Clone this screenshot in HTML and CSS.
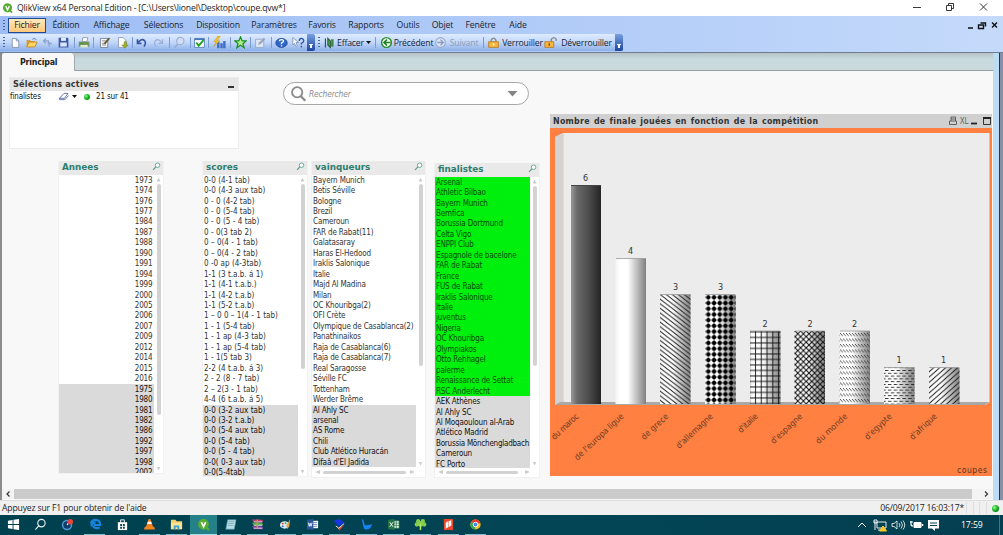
FILE: index.html
```html
<!DOCTYPE html>
<html lang="fr">
<head>
<meta charset="utf-8">
<title>QlikView x64 Personal Edition</title>
<link rel="stylesheet" href="styles.css">
</head>
<body>
<svg class="defs" width="0" height="0">
  <defs>
    <symbol id="lens" viewBox="0 0 10 10"><circle cx="6.2" cy="3.6" r="2.5" fill="#fff" stroke="#4f9a8c" stroke-width=".9"/><path d="M4.3 5.5L1.2 8.7" stroke="#4f9a8c" stroke-width="1.2"/></symbol>
    <symbol id="qlik" viewBox="0 0 12 12"><circle cx="6" cy="5.8" r="5" fill="#56ad32"/><path d="M8 8l3 3" stroke="#56ad32" stroke-width="2"/><path d="M4 3.8l2 4.2 2-4.2" fill="none" stroke="#fff" stroke-width="1.5"/></symbol>
  </defs>
</svg>
<div class="window">
  <header class="titlebar">
    <svg class="app-icon" viewBox="0 0 12 12"><use href="#qlik"/></svg>
    <span class="title">QlikView x64 Personal Edition - [C:\Users\lionel\Desktop\coupe.qvw*]</span>
    <svg class="win-buttons" viewBox="0 0 80 16" fill="none" stroke="#222" stroke-width=".9"><path d="M1 7.500h8M34.500 5.500h5v5h-5zM36.500 5.500v-2h5v5h-2M68 3.500l7 7M75 3.500l-7 7"/></svg>
  </header>
  <nav class="menubar">
    <span class="grip"></span>
    <span class="menu active">Fichier</span><span class="menu">Édition</span><span class="menu">Affichage</span><span class="menu">Sélections</span><span class="menu">Disposition</span><span class="menu">Paramètres</span><span class="menu">Favoris</span><span class="menu">Rapports</span><span class="menu">Outils</span><span class="menu">Objet</span><span class="menu">Fenêtre</span><span class="menu">Aide</span>
    <svg class="mdi" viewBox="0 0 32 10" fill="none" stroke="#111"><path d="M1 8h5M13.500 3h5v3.500M11.500 5h5v3.500h-5zM25 2.500l5 5M30 2.500l-5 5" stroke-width="1.4"/></svg>
  </nav>
  <div class="toolbars">
    <div class="bar main-bar">
      <span class="grip"></span>
      <svg class="ic" viewBox="0 0 16 16"><path d="M4 3h5l3 3v8H4z" fill="#fff" stroke="#7a8aa8"/><path d="M9 3v3h3" fill="none" stroke="#7a8aa8"/></svg>
      <svg class="ic" viewBox="0 0 16 16"><path d="M2 13V5h4l1 1h5v7z" fill="#d69c34"/><path d="M2 13.500l3-6h10l-3 6z" fill="#ffd45f" stroke="#c08322"/><path d="M9 4q3-3 5 1" fill="none" stroke="#4b6b9c"/></svg>
      <svg class="ic" viewBox="0 0 16 16" fill="none" stroke="#8ba4cc" stroke-width="1.6"><path d="M3 6h6v4M6 3L3 6l3 3M13 9h-3v4M10 8l3 2"/></svg>
      <svg class="ic" viewBox="0 0 16 16"><path d="M2 2h11l1 1v11H2z" fill="#3e5aa6"/><path d="M5 2h6v4H5z" fill="#e4ecfa"/><path d="M4 8h8v5H4z" fill="#d9e4f5"/></svg>
      <i class="sep"></i>
      <svg class="ic" viewBox="0 0 16 16"><path d="M5 7l1-5h6l-1 5z" fill="#fff" stroke="#8590a3"/><path d="M1 7h13v6H1z" fill="#75905e"/><path d="M3 11h9v3H3z" fill="#dcebc8"/><path d="M3 9h4" stroke="#35a329" stroke-width="1.500"/></svg>
      <i class="sep"></i>
      <svg class="ic" viewBox="0 0 16 16"><path d="M3 3h9v11H3z" fill="#f7f9ff" stroke="#68758b"/><path d="M5 6h5M5 9h5M5 11h5" stroke="#777"/><path d="M7 9l6-7 2 1-6 7z" fill="#6b5a2c"/></svg>
      <svg class="ic" viewBox="0 0 16 16"><path d="M3 2h6l3 3v9H3z" fill="#fff" stroke="#8792a8"/><path d="M10 7v4h-3l4 4 4-4h-2V7z" fill="#9cad2c" stroke="#71821b" stroke-width=".6"/></svg>
      <i class="sep"></i>
      <svg class="ic" viewBox="0 0 16 16"><path d="M3 4v5h5M3.500 8.500Q8 2 12 6q2 3-1 7" fill="none" stroke="#3657a8" stroke-width="2"/></svg>
      <svg class="ic" viewBox="0 0 16 16"><path d="M13 4v5H8M12.500 8.500Q8 2 4 6q-2 3 1 7" fill="none" stroke="#9db0d4" stroke-width="1.600"/></svg>
      <i class="sep"></i>
      <svg class="ic" viewBox="0 0 16 16"><circle cx="9" cy="6" r="4.500" fill="#cfdcf3" stroke="#9aaccd" stroke-width="1.300"/><path d="M6 10l-4 4" stroke="#9aaccd" stroke-width="2"/></svg>
      <i class="sep"></i>
      <svg class="ic" viewBox="0 0 16 16"><path d="M2 3h12v11H2z" fill="#fff" stroke="#4876b9"/><path d="M2 3h12v2H2z" fill="#4876b9"/><path d="M4 8l3 4 6-7" fill="none" stroke="#24a322" stroke-width="2.400"/></svg>
      <i class="sep"></i>
      <svg class="ic" viewBox="0 0 16 16"><path d="M5 7h3v8H5zM9 9h3v6H9zM12.500 6h3v9h-3z" fill="#416fc2"/><path d="M6 0L1 7h3l-3 6 7-7H5l4-6z" fill="#ffc928" stroke="#b98714" stroke-width=".6"/></svg>
      <i class="sep"></i>
      <svg class="ic" viewBox="0 0 16 16"><path d="M8 1l2 5h5l-4 3.500 1.500 5L8 11.500l-4.500 3 1.500-5L1 6h5z" fill="#b5ee8e" stroke="#189025" stroke-width="1.500"/></svg>
      <i class="sep"></i>
      <svg class="ic" viewBox="0 0 16 16"><path d="M2 4h10v10H2z" fill="#dfe8f7" stroke="#90a2c1"/><path d="M5 11l1-3 6-6 2 2-6 6z" fill="#9aa7bd"/></svg>
      <i class="sep"></i>
      <svg class="ic" viewBox="0 0 16 16"><ellipse cx="8" cy="8.500" rx="7" ry="5.500" fill="#2f66c9" stroke="#183f91"/><path d="M5.500 6.500q0-2 2.500-2T10.500 6.500q0 1-2.500 2V10M8 11.300v1.500" fill="none" stroke="#fff" stroke-width="1.600"/></svg>
      <svg class="ic" viewBox="0 0 16 16"><path d="M1 2v9l2-2 2 4 1.500-1L5 8h3z" fill="#fff" stroke="#6176a0" stroke-width=".8"/><path d="M9 6q0-3 2.500-3T14.500 6q0 1.500-3 3v1.500M11.500 12v2" fill="none" stroke="#2b54a8" stroke-width="1.600"/></svg>
      <span class="cap"></span>
    </div>
    <div class="bar nav-bar">
      <span class="grip"></span>
      <svg class="ic" viewBox="0 0 16 16"><path d="M3 3v11M6 3l3 3v8l-3-3z" stroke="#245b36" stroke-width="1.400" fill="#4cb04f"/><path d="M10 4h3v9h-3z" fill="#407f45"/></svg>
      <span class="btn">Effacer</span><span class="caret"></span><i class="sep"></i>
      <svg class="ic" viewBox="0 0 16 16"><circle cx="8" cy="8" r="6" fill="#f4fff0" stroke="#278d30" stroke-width="1.800"/><path d="M13 8H5M8.500 4.500L5 8l3.500 3.500" fill="none" stroke="#217f2b" stroke-width="2"/></svg>
      <span class="btn">Précédent</span>
      <svg class="ic" viewBox="0 0 16 16"><circle cx="8" cy="8" r="6" fill="#d9e6fa" stroke="#98a9c8" stroke-width="1.300"/><path d="M4 8h7M8 4.500L11.500 8 8 11.500" fill="none" stroke="#8a9cbd" stroke-width="1.600"/></svg>
      <span class="btn off">Suivant</span><i class="sep"></i>
      <svg class="ic" viewBox="0 0 16 16"><path d="M5 8V5q3-5 6 0v3" fill="none" stroke="#8b8b83" stroke-width="1.600"/><path d="M2 7h12v7H2z" fill="#f5b63c" stroke="#b9761d"/><path d="M8 9v3" stroke="#fff2c8" stroke-width="2"/></svg>
      <span class="btn">Verrouiller</span>
      <svg class="ic" viewBox="0 0 16 16"><path d="M9 8V4q3-4 6 0v2" fill="none" stroke="#8b8b83" stroke-width="1.600"/><path d="M1 7h11v7H1z" fill="#f5b63c" stroke="#b9761d"/><path d="M6.500 9v3" stroke="#a23a12" stroke-width="1.800"/></svg>
      <span class="btn">Déverrouiller</span>
      <span class="cap"></span>
    </div>
  </div>
  <div class="workspace">
    <div class="document">
      <div class="tabs"><span class="tab">Principal</span></div>
      <main class="sheet">
        <section class="left">
          <div class="top-row">
            <div class="selections">
              <div class="sel-head"><span>Sélections actives</span><i class="minimize"></i></div>
              <div class="sel-row"><span class="field">finalistes</span>
                <svg class="eraser" viewBox="0 0 12 10"><path d="M1 7l5-5.500h4.500L6.500 7z" fill="#fff" stroke="#596ba2"/><path d="M1 7v1.500h6L11 4" fill="none" stroke="#596ba2"/></svg>
                <span class="caret"></span><i class="dot"></i><span>21 sur 41</span></div>
            </div>
            <div class="search">
              <svg class="search-icon" viewBox="0 0 20 20" fill="none" stroke="#8a8a8a"><circle cx="8" cy="8" r="5.700" stroke-width="2"/><path d="M12 12.500l5 5" stroke-width="2.600"/></svg>
              <span class="hint">Rechercher</span><i class="drop"></i>
            </div>
          </div>
          <div class="lists">
            <article class="listbox years">
              <h2>Annees<svg viewBox="0 0 10 10"><use href="#lens"/></svg></h2>
              <div class="body">
                <ul>
                  <li>1973</li><li>1974</li><li>1976</li><li>1977</li><li>1984</li><li>1987</li><li>1988</li><li>1990</li><li>1991</li><li>1994</li><li>1999</li><li>2000</li><li>2005</li><li>2006</li><li>2007</li><li>2009</li><li>2012</li><li>2014</li><li>2015</li><li>2016</li>
                  <li class="ex">1975</li><li class="ex">1980</li><li class="ex">1981</li><li class="ex">1982</li><li class="ex">1986</li><li class="ex">1992</li><li class="ex">1997</li><li class="ex">1998</li><li class="ex">2002</li>
                </ul>
                <div class="vscroll"><i class="up"></i><i class="thumb"></i><i class="down"></i></div>
              </div>
            </article>
            <article class="listbox scores">
              <h2>scores<svg viewBox="0 0 10 10"><use href="#lens"/></svg></h2>
              <div class="body">
                <ul>
                  <li>0-0 (4-1 tab)</li><li>0-0 (4-3 aux tab)</li><li>0 - 0 (4-2 tab)</li><li>0 - 0 (5-4 tab)</li><li>0 - 0 (5 - 4 tab)</li><li>0 - 0(3 tab 2)</li><li>0 – 0(4 - 1 tab)</li><li>0 – 0(4 - 2 tab)</li><li>0 -0 ap (4-3tab)</li><li>1-1 (3 t.a.b. á 1)</li><li>1-1 (4-1 t.a.b.)</li><li>1-1 (4-2 t.a.b)</li><li>1-1 (5-2 t.a.b)</li><li>1 – 0 0 – 1(4 - 1 tab)</li><li>1 - 1 (5-4 tab)</li><li>1 - 1 ap (4-3 tab)</li><li>1 - 1 ap (5-4 tab)</li><li>1 - 1(5 tab 3)</li><li>2-2 (4 t.a.b. á 3)</li><li>2 - 2 (8 - 7 tab)</li><li>2 – 2(3 - 1 tab)</li><li>4-4 (6 t.a.b. á 5)</li>
                  <li class="ex">0-0 (3-2 aux tab)</li><li class="ex">0-0 (3-2 t.a.b)</li><li class="ex">0-0 (5-4 aux tab)</li><li class="ex">0-0 (5-4 tab)</li><li class="ex">0-0 (5 - 4 tab)</li><li class="ex">0-0( 0-3 aux tab)</li><li class="ex">0-0(5-4tab)</li>
                </ul>
                <div class="vscroll"><i class="up"></i><i class="thumb"></i><i class="down"></i></div>
              </div>
            </article>
            <article class="listbox winners">
              <h2>vainqueurs<svg viewBox="0 0 10 10"><use href="#lens"/></svg></h2>
              <div class="body">
                <ul>
                  <li>Bayern Munich</li><li>Betis Séville</li><li>Bologne</li><li>Brezil</li><li>Cameroun</li><li>FAR de Rabat(11)</li><li>Galatasaray</li><li>Haras El-Hedood</li><li>Iraklis Salonique</li><li>Italie</li><li>Majd Al Madina</li><li>Milan</li><li>OC Khouribga(2)</li><li>OFI Crète</li><li>Olympique de Casablanca(2)</li><li>Panathinaikos</li><li>Raja de Casablanca(6)</li><li>Raja de Casablanca(7)</li><li>Real Saragosse</li><li>Séville FC</li><li>Tottenham</li><li>Werder Brême</li>
                  <li class="ex">Al Ahly SC</li><li class="ex">arsenal</li><li class="ex">AS Rome</li><li class="ex">Chili</li><li class="ex">Club Atlético Huracán</li><li class="ex">Difaâ d'El Jadida</li>
                </ul>
                <div class="vscroll"><i class="up"></i><i class="thumb"></i><i class="down"></i></div>
              </div>
              <div class="hscroll"><i class="lf"></i><i class="thumb"></i><i class="rt"></i></div>
            </article>
            <article class="listbox finalists">
              <h2>finalistes<svg viewBox="0 0 10 10"><use href="#lens"/></svg></h2>
              <div class="body">
                <ul>
                  <li class="on">Arsenal</li><li class="on">Athletic Bilbao</li><li class="on">Bayern Munich</li><li class="on">Bemfica</li><li class="on">Borussia Dortmund</li><li class="on">Celta Vigo</li><li class="on">ENPPI Club</li><li class="on">Espagnole de bacelone</li><li class="on">FAR de Rabat</li><li class="on">France</li><li class="on">FUS de Rabat</li><li class="on">Iraklis Salonique</li><li class="on">Italie</li><li class="on">juventus</li><li class="on">Nigeria</li><li class="on">OC Khouribga</li><li class="on">Olympiakos</li><li class="on">Otto Rehhagel</li><li class="on">palerme</li><li class="on">Renaissance de Settat</li><li class="on">RSC Anderlecht</li>
                  <li class="ex">AEK Athènes</li><li class="ex">Al Ahly SC</li><li class="ex">Al Moqaouloun al-Arab</li><li class="ex">Atlético Madrid</li><li class="ex tight">Borussia Mönchengladbach</li><li class="ex">Cameroun</li><li class="ex">FC Porto</li>
                </ul>
                <div class="vscroll"><i class="up"></i><i class="thumb"></i><i class="down"></i></div>
              </div>
              <div class="hscroll"><i class="lf"></i><i class="thumb"></i><i class="rt"></i></div>
            </article>
          </div>
        </section>
        <section class="chart">
          <div class="chart-head"><span class="chart-title">Nombre de finale jouées en fonction de la compétition</span>
            <span class="xl">XL</span>
            <svg class="chart-tools left-tool" viewBox="0 0 10 10" fill="none" stroke="#555" stroke-width=".9"><path d="M3 5V1h4.500v4M1.500 5h7v3.500h-7zM3 3h4"/></svg>
            <svg class="chart-tools right-tool" viewBox="0 0 22 10"><path d="M1 7.500h6" stroke="#222" stroke-width="1.800"/><path d="M13.500 2h7v6.500h-7z" fill="none" stroke="#333"/><path d="M13 2h8" stroke="#222" stroke-width="2"/></svg>
          </div>
          <svg class="plot" viewBox="550 128 442 348">
            <defs>
              <linearGradient id="dark"><stop offset="0" stop-color="#999"/><stop offset=".2" stop-color="#6a6a6a"/><stop offset=".6" stop-color="#4b4b4b"/><stop offset="1" stop-color="#242424"/></linearGradient>
              <linearGradient id="light"><stop offset="0" stop-color="#f4f4f4"/><stop offset=".15" stop-color="#fff"/><stop offset=".4" stop-color="#fff"/><stop offset="1" stop-color="#808080"/></linearGradient>
              <pattern id="p3" width="6" height="4.600" patternUnits="userSpaceOnUse"><path d="M-6 -4.600L12 9.200M-6 0L6 9.200M0 -4.600L12 4.600" stroke="#2c2c2c" stroke-width=".95"/></pattern>
              <pattern id="p4" x="705.500" y="294.500" width="5.700" height="5.700" patternUnits="userSpaceOnUse"><circle cx="2.850" cy="2.850" r="2.100"/><path d="M0 2.850h5.700M2.850 0v5.700" stroke="#000" stroke-width=".7"/></pattern>
              <pattern id="p5" x="753" y="331" width="5.800" height="5.500" patternUnits="userSpaceOnUse"><path d="M0 1h6M2.500 0v6" stroke="#111" stroke-width=".95"/></pattern>
              <pattern id="p6" x="795" y="331" width="5.600" height="5.600" patternUnits="userSpaceOnUse"><path d="M-1 -1l8 8M-1 6.600l8-8" stroke="#111" stroke-width="1.100"/></pattern>
              <pattern id="p7" x="840" y="333" width="3" height="5.500" patternUnits="userSpaceOnUse"><path d="M0 0L3 3.200" stroke="#333" stroke-width=".8"/></pattern>
              <pattern id="p8" x="885" y="370" width="5.800" height="5.600" patternUnits="userSpaceOnUse"><path d="M0 .5h3.500M2.900 3.300h2.900M0 3.300h.6" stroke="#222" stroke-width=".9"/></pattern>
              <pattern id="p9" width="6" height="5.300" patternUnits="userSpaceOnUse"><path d="M-6 10.600L12 -5.300M-6 5.300L6 -5.300M0 10.600L12 0" stroke="#222" stroke-width="1"/></pattern>
            </defs>
            <path d="M550 128h442v348H550z" fill="#ff8040"/>
            <path d="M555 137l8-4h426.500v269l-4 3H555z" fill="#ececec"/>
            <path d="M555 137l9-4v269l-9 3z" fill="#d4d2d2"/>
            <path d="M555 405l5-3h429l-4 3z" fill="#aaa8a6"/>
            <path d="M564 134v267" stroke="#f1e5dc"/>
            <rect x="571" y="185" width="30" height="219" fill="url(#dark)"/>
            <g fill="url(#light)">
              <rect x="615.500" y="258.500" width="30.500" height="145.500"/><rect x="660" y="294.500" width="30.500" height="109.500"/><rect x="705" y="294.500" width="30.500" height="109.500"/><rect x="750" y="331" width="30.500" height="73"/><rect x="794.500" y="331" width="30.500" height="73"/><rect x="839.500" y="331" width="30.500" height="73"/><rect x="884" y="367.500" width="30.500" height="36.500"/><rect x="929" y="367.500" width="30.500" height="36.500"/>
            </g>
            <rect x="660" y="294.500" width="30.500" height="109.500" fill="url(#p3)"/><rect x="705" y="294.500" width="30.500" height="109.500" fill="url(#p4)"/><rect x="750" y="331" width="30.500" height="73" fill="url(#p5)"/><rect x="794.500" y="331" width="30.500" height="73" fill="url(#p6)"/><rect x="839.500" y="331" width="30.500" height="73" fill="url(#p7)"/><rect x="884" y="367.500" width="30.500" height="36.500" fill="url(#p8)"/><rect x="929" y="367.500" width="30.500" height="36.500" fill="url(#p9)"/>
            <path d="M571 185.500h30" stroke="#444"/>
            <path d="M616 258.500h30M660 294.500h30M705 294.500h30M750 331h30M795 331h30M840 331h30M884 367.500h30M929 367.500h30" stroke="#999" stroke-width=".8"/>
            <g class="values"><text x="585.500" y="181">6</text><text x="630.500" y="254">4</text><text x="675.500" y="290">3</text><text x="720.500" y="290">3</text><text x="765" y="327">2</text><text x="810" y="327">2</text><text x="854.500" y="327">2</text><text x="899" y="363">1</text><text x="943.500" y="363">1</text></g>
            <g class="cats">
              <text transform="translate(579.300 417) rotate(-43)" textLength="34">du maroc</text>
              <text transform="translate(624.300 417) rotate(-43)" textLength="64">de l'europa ligue</text>
              <text transform="translate(669 417) rotate(-43)" textLength="34">de grece</text>
              <text transform="translate(713.500 417) rotate(-43)" textLength="47">d'allemagne</text>
              <text transform="translate(758.500 417) rotate(-43)" textLength="24">d'italie</text>
              <text transform="translate(803 417) rotate(-43)" textLength="40">d'espagne</text>
              <text transform="translate(848 417) rotate(-43)" textLength="40">du monde</text>
              <text transform="translate(892.500 417) rotate(-43)" textLength="34">d'egypte</text>
              <text transform="translate(937.500 417) rotate(-43)" textLength="34">d'afrique</text>
            </g>
            <text class="axis" x="957" y="473" textLength="30">coupes</text>
          </svg>
        </section>
      </main>
      <div class="page-scroll"><svg viewBox="0 0 10 10"><path d="M6.500 2.500L4 5l2.500 2.500" /></svg><i class="track-thumb"></i><svg viewBox="0 0 10 10"><path d="M4 2.500L6.500 5 4 7.500"/></svg></div>
    </div>
    <div class="edge"></div>
  </div>
  <footer class="status"><span>Appuyez sur F1 pour obtenir de l'aide</span><span class="stamp">06/09/2017 16:03:17*</span><i class="cell"></i><i class="cell"></i><i class="cell"></i><i class="cell"></i><i class="led"></i></footer>
  <div class="taskbar">
    <div class="apps">
      <span class="app"><svg viewBox="0 0 14 14"><path d="M1 3l5-.8v4.300H1zM7 2l6-1v5.500H7zM1 7.500h5v4.300L1 11zM7 7.500h6V13l-6-1z" fill="#fff"/></svg></span>
      <span class="app"><svg viewBox="0 0 14 14" fill="none" stroke="#e6f0f2" stroke-width="1.200"><circle cx="8" cy="5.500" r="4"/><path d="M5 8.500L1.500 12.500"/></svg></span>
      <span class="app"><svg viewBox="0 0 14 14"><circle cx="6.500" cy="7.500" r="4.800" fill="#123d6b" stroke="#4c9bd8" stroke-width="1.600"/><path d="M6.500 7.500L10 3" stroke="#fff" stroke-width="1.200"/><circle cx="10" cy="4" r="3" fill="#e8463e"/></svg></span>
      <span class="app run"><svg viewBox="0 0 14 14"><path d="M2 6q1-4 5-4 5 0 5 5.500H5M2.500 9Q3 4.500 7 5M4.500 8q.5 4 7 2.500" fill="none" stroke="#1684de" stroke-width="2.300"/></svg></span>
      <span class="app"><svg viewBox="0 0 14 14"><path d="M2 4.500h10V13H2z" fill="#fff"/><path d="M5 5V2h4v3" fill="none" stroke="#fff"/><path d="M4.500 6.500h2v2h-2zm3 0h2v2h-2zm-3 3h2v2h-2zm3 0h2v2h-2z" fill="#04475a"/></svg></span>
      <span class="app run"><svg viewBox="0 0 14 14"><path d="M6 1h2l3 9H3z" fill="#f58220"/><path d="M5.300 4h3.400l.8 2.500h-5z" fill="#fff"/><path d="M2 9.500h10l1 3H1z" fill="#f58220"/></svg></span>
      <span class="app run"><svg viewBox="0 0 14 14"><path d="M1 2h5l1 1.500h6V12H1z" fill="#f3cf69"/><path d="M1 5h12v7H1z" fill="#ffe394"/><path d="M4 12V8h6v4h-2v-2H6v2z" fill="#39a4d6"/></svg></span>
      <span class="app run current"><svg viewBox="0 0 12 12"><use href="#qlik"/></svg></span>
      <span class="app run"><svg viewBox="0 0 14 14"><path d="M4 2h9l-2 10H2z" fill="#b9dde6" stroke="#5f9eaf" stroke-width=".7"/><path d="M5 4h6M4.500 6h6M4 8h6" stroke="#679bac" stroke-width=".7"/></svg></span>
      <span class="app run"><svg viewBox="0 0 14 14"><path d="M1 1.500h10l2 1.500v1.500H3z" fill="#c33e75"/><path d="M1 5h10l2 1.500V8H3z" fill="#53a952"/><path d="M1 8.500h10l2 1.500v2H3z" fill="#7e3fa0"/><path d="M3 4.200h9M3 7.800h9M3 11h9" stroke="#f2e9f5" stroke-width=".9"/><path d="M6 1.500h1.500v10H6z" fill="#c79a35"/></svg></span>
      <span class="app run"><svg viewBox="0 0 14 14"><ellipse cx="6" cy="7.500" rx="5" ry="4" fill="#d8e8ee"/><circle cx="4" cy="6" r="1" fill="#e34234"/><circle cx="7" cy="5.500" r="1" fill="#34a853"/><circle cx="4" cy="9" r="1" fill="#2860c5"/><path d="M12 1L8 8l1 4 2-3z" fill="#e2a54a"/></svg></span>
      <span class="app run"><svg viewBox="0 0 14 14"><path d="M7 3h6v8H7z" fill="#fff"/><path d="M8 5h4M8 7h4M8 9h4" stroke="#2b579a" stroke-width=".7"/><path d="M1 2l7-1v12l-7-1z" fill="#2b579a"/><path d="M2.500 5l1 4 1-3.500 1 3.500 1-4" fill="none" stroke="#fff" stroke-width=".9"/></svg></span>
      <span class="app run"><svg viewBox="0 0 14 14"><path d="M1 3l6-2 5 4-6 4z" fill="#1836e8"/><path d="M3 7.500l3 3 6-3-5 6z" fill="#e24a2a"/><path d="M3 8.500l3 2.500 6-5" fill="none" stroke="#eee"/></svg></span>
      <span class="app run"><svg viewBox="0 0 14 14"><path d="M2 1q2 0 3 6.500 3 1 8-1-1 6-7 6-2 0-3-6z" fill="#1685f4"/></svg></span>
      <span class="app run"><svg viewBox="0 0 14 14"><path d="M7 3h6v8H7z" fill="#e9f4ec" stroke="#217346" stroke-width=".6"/><path d="M10 3v8M7 5.500h6M7 8h6" stroke="#217346" stroke-width=".7"/><path d="M1 2l7-1v12l-7-1z" fill="#217346"/><path d="M3 4.500l3.500 5M6.500 4.500L3 9.500" stroke="#fff"/></svg></span>
      <span class="app run"><svg viewBox="0 0 14 14"><g fill="#84cf4c"><circle cx="4.500" cy="3.500" r="2.300"/><circle cx="9.500" cy="3.500" r="2.300"/><circle cx="3" cy="7" r="2.300"/><circle cx="11" cy="7" r="2.300"/><circle cx="7" cy="6.500" r="3"/></g><path d="M7 6v7" stroke="#b8e468" stroke-width="1.600"/></svg></span>
      <span class="app run"><svg viewBox="0 0 14 14"><path d="M2 1h10v12H2z" fill="#e8492c"/><path d="M4 5l2.500-1.500V10L4 11.500zM7 3.500l3-1v5.500l-3 2z" fill="#fff"/></svg></span>
      <span class="app run"><svg viewBox="0 0 14 14"><circle cx="7" cy="7" r="5.500" fill="#fbc116"/><path d="M7 7L2.200 4.300A5.500 5.500 0 0 1 12.300 5.500z" fill="#e33b2e"/><path d="M7 7l-.5 5.500A5.500 5.500 0 0 1 2.200 4.300z" fill="#34a853"/><circle cx="7" cy="7" r="2.500" fill="#4285f4" stroke="#fff"/></svg></span>
    </div>
    <svg class="tray" viewBox="0 0 86 20" fill="none" stroke="#fff"><path d="M3 12l4-4 4 4"/><path d="M22 7h9v6h-9zM20 6v9M19 5h3v3h-3zM23 15h6" stroke-width=".9"/><path d="M28 11l3.500 5h-7z" fill="#ffc928" stroke="#ffc928"/><path d="M37 8.500h2l3-2.500v8l-3-2.500h-2zM44 8q2 2 0 4M46 6.500q3 3.500 0 7M48 5.500q3.500 4.500 0 9" stroke-width=".8"/><path d="M59 7.500h7v5h-7z" fill="#fff" stroke-width="1"/><path d="M67.500 9v2" stroke-width="1.500"/><path d="M56 6v3q0 2 2 2M55 7h3" stroke-width="1.200"/><path d="M73 5h11v8.500h-4V16l-3-2.500h-4z" fill="#fff" stroke="none"/><path d="M75 8h7M75 10.500h7" stroke="#05485a"/></svg>
    <span class="clock">17:59</span><i class="peek"></i>
  </div>
</div>
</body>
</html>
```
FILE: styles.css
```css
* { box-sizing: border-box; }
body { margin: 0; width: 1003px; height: 535px; overflow: hidden; font-family: "DejaVu Sans Condensed", "DejaVu Sans", sans-serif; font-stretch: condensed; font-size: 8px; color: #333; background: #fff; }
svg { display: block; flex: none; }
.defs { position: absolute; }
.window { width: 1003px; height: 535px; display: flex; flex-direction: column; }
i { display: block; flex: none; }

.titlebar { height: 16px; flex: none; display: flex; align-items: center; padding: 0 11px 0 2px; background: #fff; font: 8.7px/14px "Open Sans", sans-serif; color: #222; }
.app-icon { width: 11px; height: 12px; margin-right: 4px; }
.title { flex: 1; white-space: nowrap; letter-spacing: -.17px; }
.win-buttons { width: 80px; height: 16px; }

.menubar { height: 18px; flex: none; display: grid; grid-template-columns: 8px 38px 40px 51px 53px 56px 56px 40px 48px 36px 33px 43px 32px 1fr; align-items: center; background: linear-gradient(90deg, #9dbdf4, #b3cdf8 60%, #c5dafb); font: 8.7px/16px "Open Sans", sans-serif; color: #1a1f30; padding-right: 4px; }
.menu { text-align: center; white-space: nowrap; letter-spacing: -.15px; }
.menu.active { height: 15px; line-height: 13px; border: 1px solid #1f4a8f; background: linear-gradient(#ffe9bd, #ffc97b); }
.grip { width: 1.5px; height: 11px; justify-self: center; background: repeating-linear-gradient(#496594 0 1px, transparent 1px 3px); }
.mdi { width: 32px; height: 10px; justify-self: end; }

.toolbars { height: 19px; flex: none; display: flex; align-items: flex-start; border-bottom: 1.500px solid #6e7d92; background: linear-gradient(90deg, #9dbdf4, #b3cdf8 60%, #c5dafb); font: 8.7px/16px "Open Sans", sans-serif; color: #1a1f30; }
.bar { display: grid; height: 17px; align-items: center; justify-items: center; background: linear-gradient(#dfecff, #c0d6fa 50%, #8cafe8); }
.main-bar { width: 315px; grid-template-columns: 8px 15px 17px 15px 17px 4px 16px 3px 19px 16px 4px 15px 18px 4px 17px 4px 15px 3px 19px 3px 17px 3px 17px 4px 17px 17px 8px; }
.nav-bar { width: 308px; grid-template-columns: 8px 13px 29px 7px 7px 14px 41px 13px 34px 4px 17px 41px 15px 1fr 8px; }
.ic { width: 13px; height: 13px; }
.sep { width: 1px; height: 11px; background: #7b9bd2; }
.cap { width: 8px; height: 17px; border-radius: 0 2px 2px 0; background: linear-gradient(#789fe1, #1c469b); display: flex; align-items: flex-end; justify-content: center; }
.cap::after { content: ""; width: 4px; height: 3px; margin-bottom: 3px; border-top: 1px solid #fff; background: linear-gradient(90deg, transparent 1px, #fff 1px 3px, transparent 3px); }
.btn { white-space: nowrap; letter-spacing: -.18px; }
.off { color: #8d9ab6; }
.caret { width: 5px; height: 3px; background: #111; clip-path: polygon(0 0, 100% 0, 50% 100%); }

.workspace { height: 447px; flex: none; display: flex; }
.document { width: 993px; border-left: 2px solid #8c8c8c; display: flex; flex-direction: column; background: #f8f8f8; }
.edge { width: 10px; background: linear-gradient(90deg, #bcdcf5 0 6px, #1d3857 6px 7.500px, #8790a8 7.500px); }
.tabs { height: 18px; flex: none; border-bottom: 1.500px solid #949fa5; background: linear-gradient(#b6c1c5, #c7dade 35%, #ccd9dc); }
.tab { display: block; width: 73px; height: 18px; border-right: 1px solid #9fa9ad; border-radius: 3px 4px 0 0; background: #f8f8f8; padding-left: 18px; font-weight: bold; font-size: 8.800px; line-height: 18px; color: #222; letter-spacing: -.2px; }
.sheet { height: 418px; flex: none; display: flex; align-items: flex-start; }
.left { width: 548px; }
.top-row { display: flex; padding: 6px 0 0 7px; height: 90px; }
.selections { width: 230px; height: 72px; background: #fff; border: 1px solid #ececec; }
.sel-head { height: 13px; display: flex; justify-content: space-between; padding: 0 4px 0 3px; background: #e6e6e6; font-weight: bold; font-size: 9px; line-height: 13px; color: #383838; letter-spacing: .2px; }
.minimize { width: 6px; height: 2px; margin-top: 8px; background: #333; }
.sel-row { display: flex; align-items: center; height: 11px; color: #111; letter-spacing: -.15px; }
.field { width: 48px; }
.eraser { width: 12px; height: 9px; margin-right: 2px; }
.dot { width: 6px; height: 6px; margin: 0 6px 0 7px; border-radius: 50%; background: radial-gradient(circle at 35% 35%, #7f7, #0a9d12 60%); }
.search { width: 246px; height: 23px; margin: 5px 0 0 44px; display: flex; align-items: center; border: 1px solid #a6a6a6; border-radius: 12px; background: #fff; padding: 0 10px 0 6px; }
.search-icon { width: 18px; height: 18px; }
.hint { flex: 1; margin-left: 1px; font-style: italic; color: #8c8c8c; font-size: 8.400px; letter-spacing: -.15px; }
.drop { width: 11px; height: 6px; background: #858585; clip-path: polygon(0 0, 100% 0, 50% 100%); }

.lists { display: flex; align-items: flex-start; padding-left: 56px; }
.listbox { flex: none; background: #fff; border: 1px solid #f1f1f1; border-top: 0; }
.listbox h2 { margin: 0; height: 13.600px; display: flex; justify-content: space-between; padding: 0 2px 0 3px; background: #e8e9e8; color: #2e7d6f; font-size: 8.800px; line-height: 13px; font-family: "DejaVu Sans", sans-serif; font-stretch: normal; }
.listbox h2 svg { width: 9px; height: 9px; margin-top: 1px; }
.body { display: flex; justify-content: space-between; overflow: hidden; }
.listbox ul { margin: 0; padding: 0; list-style: none; overflow: hidden; }
.listbox li { height: 10.460px; padding: 0 1px; line-height: 12px; white-space: nowrap; letter-spacing: -.15px; font-size: 8px; }
.ex { background: #dadada; color: #111; }
.on { background: #00f00e; color: #064d08; }
.listbox .tight { letter-spacing: -.24px; }
.years { width: 106px; margin-right: 38px; }
.years .body { height: 298px; }
.years ul { width: 96px; text-align: right; }
.years li { padding-right: 1.500px; letter-spacing: -.1px; }
.scores { width: 106px; margin-right: 3px; }
.scores .body { height: 301px; }
.scores ul { width: 95px; }
.scores li { letter-spacing: 0; word-spacing: .1px; }
.winners { width: 115px; margin-right: 8px; }
.winners .body { height: 293px; }
.winners ul { width: 105px; }
.finalists { width: 106px; margin-top: 2px; }
.finalists .body { height: 291px; }
.finalists ul { width: 96px; }
.vscroll { width: 9px; display: flex; flex-direction: column; align-items: center; padding: 3px 0 2px; }
.up, .down { width: 4px; height: 4px; background: #ccc; }
.up { clip-path: polygon(50% 0, 100% 100%, 0 100%); }
.down { clip-path: polygon(0 0, 100% 0, 50% 100%); margin-top: auto; }
.vscroll .thumb { width: 4px; margin-top: 2px; border-radius: 2px; background: #d2d2d2; }
.years .thumb { height: 231px; }
.scores .vscroll .thumb { height: 185px; }
.winners .vscroll .thumb { height: 182px; }
.finalists .vscroll .thumb { height: 180px; }
.hscroll { height: 9px; display: flex; align-items: center; padding: 0 10px 0 3px; }
.hscroll .thumb { flex: 1; height: 3px; margin: 0 4px 0 3px; border-radius: 2px; background: #d2d2d2; }
.lf, .rt { width: 5px; height: 4px; background: #ccc; }
.lf { clip-path: polygon(0 50%, 100% 0, 100% 100%); }
.rt { clip-path: polygon(0 0, 100% 50%, 0 100%); }
.finalists .hscroll { padding-right: 9px; }
.finalists .hscroll .thumb { margin-right: 7px; }

.chart { width: 442px; margin-top: 43px; }
.chart-head { height: 14px; display: grid; grid-template-columns: 1fr 10px 12px 22px; align-items: center; background: #d0d0d0; padding-left: 3px; font-weight: bold; font-size: 8.800px; color: #333; white-space: nowrap; }
.chart-title { letter-spacing: .27px; word-spacing: 1px; }
.left-tool { order: 1; }
.xl { order: 2; font-weight: normal; font-size: 8px; color: #666; text-align: center; letter-spacing: -.3px; }
.right-tool { order: 3; width: 22px; }
.chart-tools { height: 10px; }
.plot { width: 442px; height: 348px; }
.values text { font-size: 9px; text-anchor: middle; fill: #333; }
.cats text { font-size: 8.500px; text-anchor: end; fill: #6b3d28; }
.axis { font-size: 8.500px; fill: #5a3424; }

.page-scroll { height: 10px; display: flex; align-items: center; background: #f3f3f3; padding-right: 1px; }
.page-scroll svg { width: 12px; height: 10px; fill: none; stroke: #333; stroke-width: 1.200; }
.track-thumb { width: 958px; height: 10px; margin-right: 8px; background: #cbcbcb; }
.status { height: 15px; flex: none; display: flex; align-items: center; background: #f0f0f0; border-top: 1px solid #ddd; padding: 0 4px 0 2px; font: 8.600px/13px "Open Sans", sans-serif; color: #222; letter-spacing: -.14px; }
.stamp { margin-left: auto; margin-right: 2px; }
.cell { width: 6.500px; height: 12px; border-left: 1px solid #ddd; }
.led { width: 7px; height: 7px; border-radius: 50%; background: radial-gradient(circle at 35% 35%, #8f8, #079d10 60%, #055a0a); }
.taskbar { height: 20px; flex: none; display: flex; background: linear-gradient(90deg, #00414f, #034555 60%, #033f50); }
.apps { display: flex; flex: 1; }
.app { width: 27.170px; height: 20px; display: flex; align-items: center; justify-content: center; border-bottom: 1px solid transparent; }
.app svg { width: 13px; height: 13px; }
.run { background: linear-gradient(90deg, transparent 3px, #83bdc9 3px 24px, transparent 24px) bottom / 100% 1px no-repeat border-box; }
.current { background: #24818a; border-bottom-color: #a4dce4; }
.tray { width: 86px; height: 20px; }
.clock { width: 58px; padding-left: 20px; color: #fff; font: 8.700px/20px "Open Sans", sans-serif; letter-spacing: -.1px; }
.peek { width: 4px; border-left: 1px solid #3f7682; }
```
